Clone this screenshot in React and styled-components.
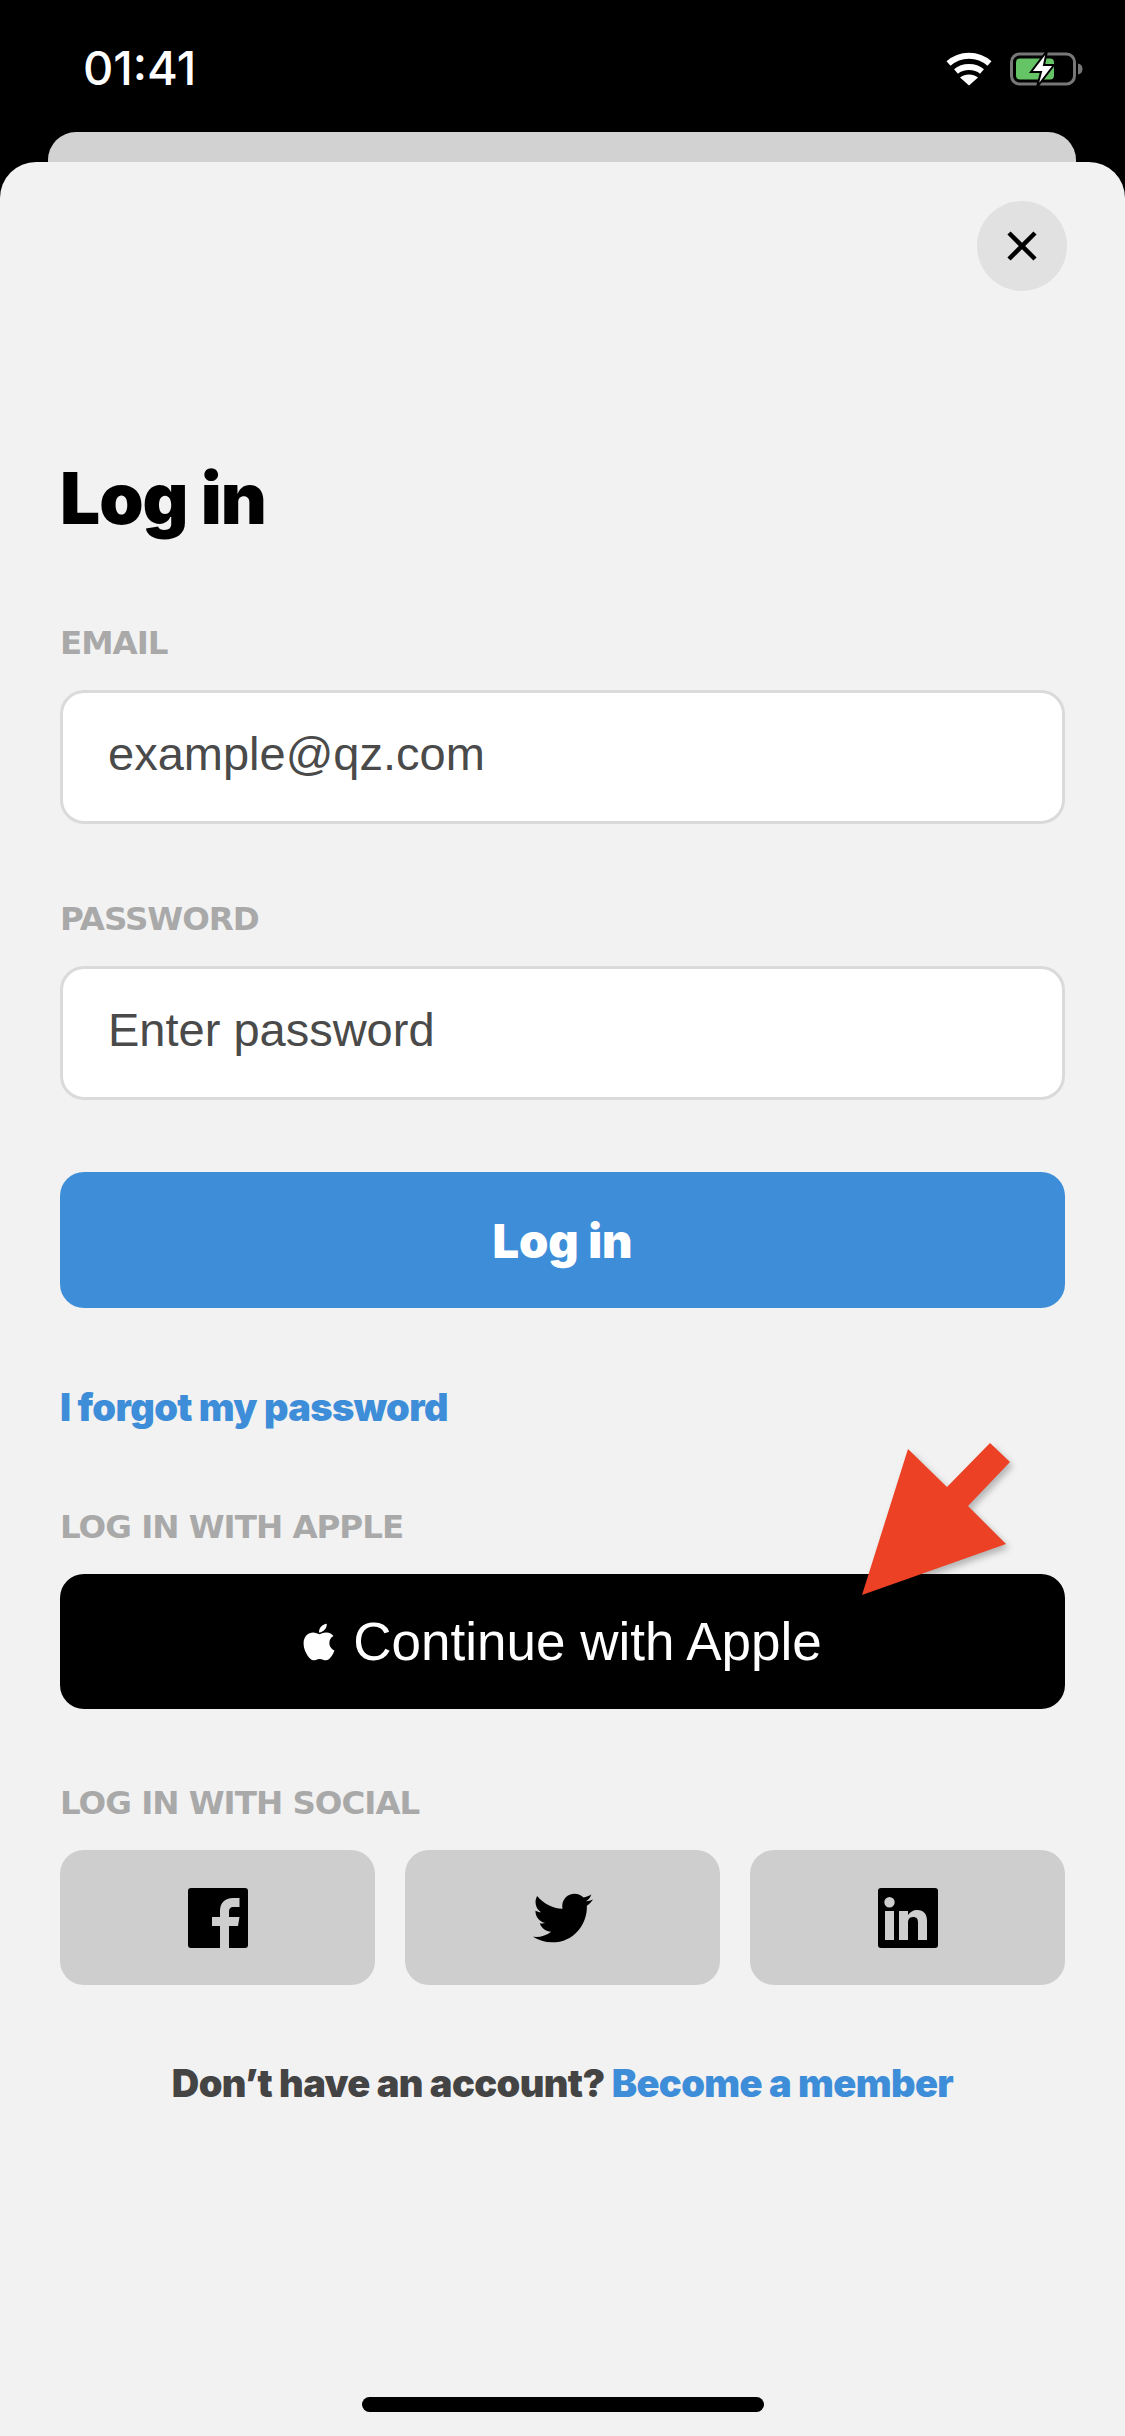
import styled, { createGlobalStyle } from "styled-components";
import { FaApple, FaTwitter } from "react-icons/fa";

const Global = createGlobalStyle`
    html, body {
        margin: 0;
        padding: 0;
        background: #000;
    }
    * { box-sizing: border-box; }
`

function Wifi() {
    return (
        <svg width="46" height="34" viewBox="0 0 46 34" fill="none">
            <path d="M2.5 11.5C14 1 32 1 43.5 11.5" stroke="#fff" strokeWidth="6" />
            <path d="M10 19.5C17 13.5 29 13.5 36 19.5" stroke="#fff" strokeWidth="6" />
            <path d="M23 33.5L14 25.5C19 21.5 27 21.5 32 25.5Z" fill="#fff" />
        </svg>
    )
}

function Battery() {
    return (
        <svg width="74" height="36" viewBox="0 0 74 36" fill="none">
            <rect x="1.5" y="3" width="63" height="30" rx="8" stroke="#777" strokeWidth="3" />
            <rect x="6" y="7.5" width="38" height="21" rx="4" fill="#65c466" />
            <path d="M68 12.5C71 13 72.5 15 72.5 18C72.5 21 71 23 68 23.5Z" fill="#777" />
            <path d="M37 0L21 21H31L27 36L44 14H34Z" fill="#fff" stroke="#000" strokeWidth="2" />
        </svg>
    )
}

function Facebook() {
    return (
        <svg width="60" height="60" viewBox="0 0 60 60">
            <path
                fillRule="evenodd"
                d="M3 0H57a3 3 0 0 1 3 3V57a3 3 0 0 1-3 3H41V38h9l1.5-9H41v-5c0-3 1-5 5-5h5.5V10H45c-8 0-13 5-13 13v6h-8v9h8v22H3a3 3 0 0 1-3-3V3a3 3 0 0 1 3-3z"
                fill="#000"
            />
        </svg>
    )
}

function Linkedin() {
    return (
        <svg width="60" height="60" viewBox="0 0 60 60">
            <path
                fillRule="evenodd"
                d="M3 0H57a3 3 0 0 1 3 3V57a3 3 0 0 1-3 3H3a3 3 0 0 1-3-3V3a3 3 0 0 1 3-3zM7 23v29h9V23zM21 23v29h9V35c0-3 1-6 5-6s5 2 5 6v17h9V33c0-7-3-11-10-11-4 0-7 2-9 5v-4zM11.5 9a5.2 5.2 0 1 0 0 10.4a5.2 5.2 0 1 0 0-10.4z"
                fill="#000"
            />
        </svg>
    )
}

export default function App() {
    return (
        <Screen>
            <Global />

            <StatusBar>
                <Clock>01:41</Clock>
                <StatusIcons>
                    <Wifi />
                    <Battery />
                </StatusIcons>
            </StatusBar>

            <BackSheet />

            <Sheet>
                <CloseRow>
                    <CloseButton aria-label="Close">
                        <svg width="32" height="32" viewBox="0 0 32 32">
                            <path d="M3 3L29 29M29 3L3 29" stroke="#000" strokeWidth="4.5" />
                        </svg>
                    </CloseButton>
                </CloseRow>

                <Title>Log in</Title>

                <Label $top={85}>EMAIL</Label>
                <Field type="text" placeholder="example@qz.com" />

                <Label $top={77}>PASSWORD</Label>
                <Field type="password" placeholder="Enter password" />

                <LoginButton>Log in</LoginButton>

                <Forgot>I forgot my password</Forgot>

                <Label $top={79}>LOG IN WITH APPLE</Label>
                <AppleWrap>
                    <AppleButton>
                        <FaApple size={42} />
                        <span>Continue with Apple</span>
                    </AppleButton>
                    <Arrow width="152" height="156" viewBox="0 0 152 156">
                        <path d="M2 154L48 8L87 46L130 2L150 21L108 65L146 103Z" fill="#ec4124" />
                    </Arrow>
                </AppleWrap>

                <Label $top={76}>LOG IN WITH SOCIAL</Label>
                <SocialRow>
                    <SocialButton><Facebook /></SocialButton>
                    <SocialButton><FaTwitter size={60} /></SocialButton>
                    <SocialButton><Linkedin /></SocialButton>
                </SocialRow>

                <Footer>
                    Don’t have an account? <FooterLink>Become a member</FooterLink>
                </Footer>

                <HomeBar />
            </Sheet>
        </Screen>
    )
}

const Screen = styled.div`
    width: 1125px;
    height: 2436px;
    background-color: #000;
    display: flex;
    flex-direction: column;
    overflow: hidden;
    font-family: "Inter", "Liberation Sans", sans-serif;
`

const StatusBar = styled.div`
    height: 132px;
    flex-shrink: 0;
    padding: 44px 41px 0 83px;
    display: flex;
    justify-content: space-between;
    align-items: flex-start;
`

const Clock = styled.div`
    color: #fff;
    font-size: 47px;
    line-height: 48px;
    font-weight: 500;
`

const StatusIcons = styled.div`
    display: flex;
    align-items: center;
    gap: 18px;
    padding-top: 7px;
`

const BackSheet = styled.div`
    height: 30px;
    flex-shrink: 0;
    margin: 0 49px 0 48px;
    background-color: #d2d2d2;
    border-radius: 28px 28px 0 0;
`

const Sheet = styled.div`
    flex: 1;
    background-color: #f2f2f2;
    border-radius: 36px 36px 0 0;
    padding: 39px 60px 0;
    display: flex;
    flex-direction: column;
`

const CloseRow = styled.div`
    display: flex;
    justify-content: flex-end;
    margin-right: -2px;
`

const CloseButton = styled.button`
    width: 90px;
    height: 90px;
    border: none;
    border-radius: 50%;
    background-color: #e1e1e1;
    display: flex;
    align-items: center;
    justify-content: center;
    padding: 0;
`

const Title = styled.h1`
    margin: 165px 0 0;
    font-size: 71px;
    line-height: 84px;
    font-weight: 900;
    letter-spacing: -1px;
    color: #000;
`

const Label = styled.div`
    margin-top: ${(props) => props.$top}px;
    font-family: "DejaVu Sans", sans-serif;
    font-size: 32.5px;
    line-height: 36px;
    font-weight: 700;
    letter-spacing: -1px;
    color: #a9a9a9;
`

const Field = styled.input`
    margin-top: 29px;
    width: 100%;
    height: 134px;
    flex-shrink: 0;
    background-color: #fff;
    border: 3px solid #dadada;
    border-radius: 24px;
    padding: 0 45px 8px;
    font-family: "Liberation Sans", sans-serif;
    font-size: 47px;
    outline: none;

    &::placeholder {
        color: #4a4a4a;
        opacity: 1;
    }
`

const LoginButton = styled.button`
    margin-top: 72px;
    height: 136px;
    flex-shrink: 0;
    border: none;
    border-radius: 24px;
    background-color: #3d8dd9;
    color: #fff;
    font-family: "Inter", sans-serif;
    font-size: 47px;
    font-weight: 900;
`

const Forgot = styled.div`
    margin-top: 76px;
    font-size: 38px;
    line-height: 46px;
    font-weight: 900;
    letter-spacing: -0.6px;
    color: #3d8dd9;
`

const AppleWrap = styled.div`
    position: relative;
    margin-top: 29px;
`

const AppleButton = styled.button`
    width: 100%;
    height: 135px;
    border: none;
    border-radius: 24px;
    background-color: #000;
    color: #fff;
    display: flex;
    align-items: center;
    justify-content: center;
    gap: 13px;
    padding: 0 5px 0 0;
    font-family: "Liberation Sans", sans-serif;
    font-size: 53px;
`

const Arrow = styled.svg`
    position: absolute;
    top: -133px;
    left: 800px;
    filter: drop-shadow(3px 4px 3px rgba(0, 0, 0, 0.25));
`

const SocialRow = styled.div`
    margin-top: 29px;
    display: grid;
    grid-template-columns: repeat(3, 1fr);
    gap: 30px;
`

const SocialButton = styled.button`
    height: 135px;
    border: none;
    border-radius: 24px;
    background-color: #cecece;
    color: #000;
    display: flex;
    align-items: center;
    justify-content: center;
    padding: 0;
`

const Footer = styled.div`
    margin-top: 75px;
    text-align: center;
    font-size: 38px;
    line-height: 46px;
    font-weight: 900;
    letter-spacing: -0.6px;
    color: #444;
`

const FooterLink = styled.span`
    color: #3d8dd9;
`

const HomeBar = styled.div`
    margin: auto auto 24px;
    width: 402px;
    height: 15px;
    flex-shrink: 0;
    border-radius: 8px;
    background-color: #000;
`
